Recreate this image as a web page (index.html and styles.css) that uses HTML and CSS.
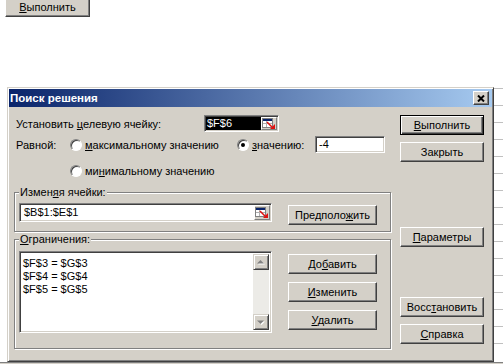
FILE: index.html
```html
<!DOCTYPE html>
<html lang="ru">

<head>
    <meta charset="UTF-8">
    <meta name="viewport" content="width=device-width, initial-scale=1.0">
    <title>Поиск решения</title>
    <link rel="stylesheet" href="styles.css">
</head>

<body>
    <div class="sheet-top">
        <button class="btn run-macro"><u>В</u>ыполнить</button>
    </div>

    <div class="workspace">
        <div class="margin-left"></div>

        <div class="dialog">
            <div class="titlebar">
                <span class="title">Поиск решения</span>
                <div class="close-btn">
                    <svg class="close-icon" width="8" height="7" viewBox="0 0 8 7">
                        <path d="M1 0.5l6 6M7 0.5l-6 6" stroke="#000" stroke-width="2" />
                    </svg>
                </div>
            </div>

            <div class="dialog-body">
                <div class="main">
                    <div class="row target-row">
                        <span class="field-label">Установить <u>ц</u>елевую ячейку:</span>
                        <div class="refedit refedit-target">
                            <span class="ref-value selected">$F$6</span>
                            <span class="ref-btn">
                                <svg width="14" height="12" viewBox="0 0 14 12">
                                    <rect x="0.5" y="0.5" width="10" height="9" fill="#fff" stroke="#808080" />
                                    <rect x="1" y="1" width="9" height="2" fill="#0a246a" />
                                    <path d="M1 5.5h9M4.5 3v6" stroke="#b0b0b0" />
                                    <path d="M5 4l5 5" stroke="#e01010" stroke-width="1.5" />
                                    <path d="M13 11H8l5-5z" fill="#e01010" />
                                </svg>
                            </span>
                        </div>
                    </div>

                    <div class="row equal-row">
                        <span class="eq-label">Равной:</span>
                        <span class="radio radio-max"><span class="radio-circle"></span><span><u>м</u>аксимальному значению</span></span>
                        <span class="radio radio-value"><span class="radio-circle checked"></span><span><u>з</u>начению:</span></span>
                        <div class="textbox value-box">-4</div>
                    </div>

                    <div class="row min-row">
                        <span class="radio"><span class="radio-circle"></span><span>ми<u>н</u>имальному значению</span></span>
                    </div>

                    <fieldset class="group changing">
                        <legend>Измен<u>я</u>я ячейки:</legend>
                        <div class="refedit refedit-wide">
                            <span class="ref-value">$B$1:$E$1</span>
                            <span class="ref-btn">
                                <svg width="14" height="12" viewBox="0 0 14 12">
                                    <rect x="0.5" y="0.5" width="10" height="9" fill="#fff" stroke="#808080" />
                                    <rect x="1" y="1" width="9" height="2" fill="#0a246a" />
                                    <path d="M1 5.5h9M4.5 3v6" stroke="#b0b0b0" />
                                    <path d="M5 4l5 5" stroke="#e01010" stroke-width="1.5" />
                                    <path d="M13 11H8l5-5z" fill="#e01010" />
                                </svg>
                            </span>
                        </div>
                        <button class="btn guess-btn">Предполо<u>ж</u>ить</button>
                    </fieldset>

                    <fieldset class="group constraints">
                        <legend><u>О</u>граничения:</legend>
                        <div class="listbox">
                            <ul class="items">
                                <li>$F$3 = $G$3</li>
                                <li>$F$4 = $G$4</li>
                                <li>$F$5 = $G$5</li>
                            </ul>
                            <div class="scrollbar">
                                <span class="scroll-btn">
                                    <svg width="8" height="5" viewBox="0 0 8 5">
                                        <path d="M4.5 1L8 4.5H1z" fill="#fff" />
                                        <path d="M3.5 0L7 3.5H0z" fill="#808080" />
                                    </svg>
                                </span>
                                <span class="scroll-track"></span>
                                <span class="scroll-btn">
                                    <svg width="8" height="5" viewBox="0 0 8 5">
                                        <path d="M1 1.5h7L4.5 5z" fill="#fff" />
                                        <path d="M0 0.5h7L3.5 4z" fill="#808080" />
                                    </svg>
                                </span>
                            </div>
                        </div>
                        <div class="side-buttons">
                            <button class="btn">До<u>б</u>авить</button>
                            <button class="btn"><u>И</u>зменить</button>
                            <button class="btn"><u>У</u>далить</button>
                        </div>
                    </fieldset>
                </div>

                <div class="buttons">
                    <button class="btn default"><u>В</u>ыполнить</button>
                    <button class="btn close-action">Закрыть</button>
                    <button class="btn options"><u>П</u>араметры</button>
                    <button class="btn reset">Восс<u>т</u>ановить</button>
                    <button class="btn help"><u>С</u>правка</button>
                </div>
            </div>
        </div>

        <div class="grid-strip"></div>
    </div>

    <div class="sheet-bottom"></div>
</body>

</html>
```

FILE: styles.css
```css
:root {
    --face: #d4d0c8;
    --light: #fff;
    --shadow: #808080;
    --dark: #404040;
    --title-1: #0a246a;
    --title-2: #a6caf0;
    --grid: #c0c0c0;
}

body {
    margin: 0;
    background: #fff;
    font-family: "Liberation Sans", Arial, sans-serif;
    font-size: 11px;
    color: #000;
    height: 364px;
    overflow: hidden;
}

button {
    font: inherit;
    color: inherit;
}

u {
    text-underline-offset: 1px;
}

/* raised classic button */
.btn {
    display: block;
    box-sizing: border-box;
    height: 20px;
    padding: 0;
    background: var(--face);
    border: 1px solid;
    border-color: var(--light) var(--dark) var(--dark) var(--light);
    box-shadow: inset -1px -1px var(--shadow);
    text-align: center;
    line-height: 16px;
}

.sheet-top {
    height: 87px;
    padding-left: 5px;
    box-sizing: border-box;
    overflow: hidden;
}

.run-macro {
    width: 85px;
    height: 21px;
    margin-top: -4px;
}

.workspace {
    display: flex;
    height: 275px;
}

.margin-left {
    width: 7px;
}

.dialog {
    width: 487px;
    flex: none;
    box-sizing: border-box;
    padding: 1px;
    background: var(--face);
    border: 1px solid;
    border-color: var(--face) var(--dark) var(--dark) var(--face);
    box-shadow: inset 1px 1px var(--light), inset -1px -1px var(--shadow);
}

.titlebar {
    height: 18px;
    display: grid;
    grid-template-columns: 1fr 16px;
    align-items: center;
    padding: 0 3px 0 1px;
    background: linear-gradient(to right, var(--title-1), var(--title-2));
}

.title {
    color: #fff;
    font-weight: bold;
    font-size: 11.5px;
}

.close-btn {
    height: 14px;
    box-sizing: border-box;
    display: flex;
    align-items: center;
    justify-content: center;
    background-color: #d4d0c8;
    border: 1px solid;
    border-color: #fff #404040 #404040 #fff;
    box-shadow: inset -1px -1px #808080;
}

.close-icon {
    display: block;
}

.dialog-body {
    height: 253px;
    display: flex;
}

.main {
    width: 384px;
    padding-left: 5px;
    box-sizing: border-box;
}

.row {
    display: flex;
    align-items: center;
    height: 17px;
    padding-left: 2px;
}

.target-row {
    margin-top: 8px;
}

.field-label {
    width: 188px;
}

/* sunken edit fields */
.refedit,
.textbox,
.listbox {
    box-sizing: border-box;
    background: #fff;
    border: 1px solid;
    border-color: var(--shadow) var(--light) var(--light) var(--shadow);
    box-shadow: inset 1px 1px var(--dark), inset -1px -1px var(--face);
}

.refedit {
    display: flex;
    align-items: stretch;
    padding: 1px;
}

.refedit-target {
    width: 75px;
    height: 17px;
}

.ref-value {
    flex: 1;
    padding-left: 1px;
    line-height: 13px;
}

.ref-value.selected {
    background: #000;
    color: #fff;
}

.refedit-wide .ref-value {
    padding-left: 3px;
    line-height: 15px;
}

.ref-btn {
    width: 16px;
    display: flex;
    align-items: center;
    justify-content: center;
    background: var(--face);
    box-sizing: border-box;
    border: 1px solid;
    border-color: var(--light) var(--shadow) var(--shadow) var(--light);
}

.equal-row {
    margin-top: 4px;
}

.eq-label {
    width: 54px;
}

.radio {
    display: flex;
    align-items: center;
    gap: 3px;
}

.radio-max {
    width: 167px;
}

.radio-value {
    width: 78px;
}

.radio-circle {
    width: 12px;
    height: 12px;
    box-sizing: border-box;
    border-radius: 50%;
    background: #fff;
    border: 1px solid;
    border-color: var(--shadow) var(--light) var(--light) var(--shadow);
    box-shadow: inset 1px 1px var(--dark);
    display: flex;
    align-items: center;
    justify-content: center;
}

.radio-circle.checked::after {
    content: "";
    width: 4px;
    height: 4px;
    border-radius: 50%;
    background: #000;
}

.textbox {
    height: 17px;
    line-height: 13px;
    padding: 1px 3px;
}

.value-box {
    width: 70px;
}

.min-row {
    margin-top: 9px;
    padding-left: 56px;
}

/* etched group boxes */
.group {
    width: 377px;
    box-sizing: border-box;
    margin: 0;
    border: 1px solid var(--shadow);
    box-shadow: inset 1px 1px var(--light), 1px 1px var(--light);
    display: flex;
    align-items: flex-start;
    gap: 16px;
}

.group legend {
    padding: 0 1px;
    line-height: 13px;
    background: var(--face);
}

.changing {
    margin-top: 7px;
    padding: 4px 4px 6px;
}

.refedit-wide {
    width: 253px;
    height: 19px;
}

.guess-btn {
    width: 89px;
    margin-top: 2px;
}

.constraints {
    margin-top: 1px;
    padding: 5px 4px 15px;
}

.listbox {
    width: 253px;
    height: 82px;
    padding: 2px;
    display: flex;
}

.items {
    flex: 1;
    list-style: none;
    margin: 0;
    padding: 3px 0 0 1px;
    line-height: 13px;
}

.scrollbar {
    width: 16px;
    display: flex;
    flex-direction: column;
}

.scroll-btn {
    height: 16px;
    box-sizing: border-box;
    display: flex;
    align-items: center;
    justify-content: center;
    background: var(--face);
    border: 1px solid;
    border-color: var(--face) var(--dark) var(--dark) var(--face);
    box-shadow: inset 1px 1px var(--light), inset -1px -1px var(--shadow);
}

.scroll-track {
    flex: 1;
    background: #ecebe7;
}

.side-buttons {
    display: flex;
    flex-direction: column;
    gap: 8px;
    margin-top: 3px;
}

.side-buttons .btn {
    width: 89px;
}

.buttons {
    margin-left: 7px;
    padding-top: 8px;
}

.buttons .btn {
    width: 84px;
}

.btn.default {
    border-color: #000;
    box-shadow: inset 1px 1px var(--light), inset -1px -1px var(--dark), inset -2px -2px var(--shadow);
}

.close-action {
    margin-top: 7px;
}

.options {
    margin-top: 65px;
}

.reset {
    margin-top: 50px;
}

.help {
    margin-top: 7px;
}

.grid-strip {
    flex: 1;
    background: repeating-linear-gradient(to bottom, transparent 0 16px, var(--grid) 16px 17px);
    background-position: 0 -15px;
}

.sheet-bottom {
    height: 2px;
    background: var(--face);
    border-top: 1px solid var(--shadow);
}
```
